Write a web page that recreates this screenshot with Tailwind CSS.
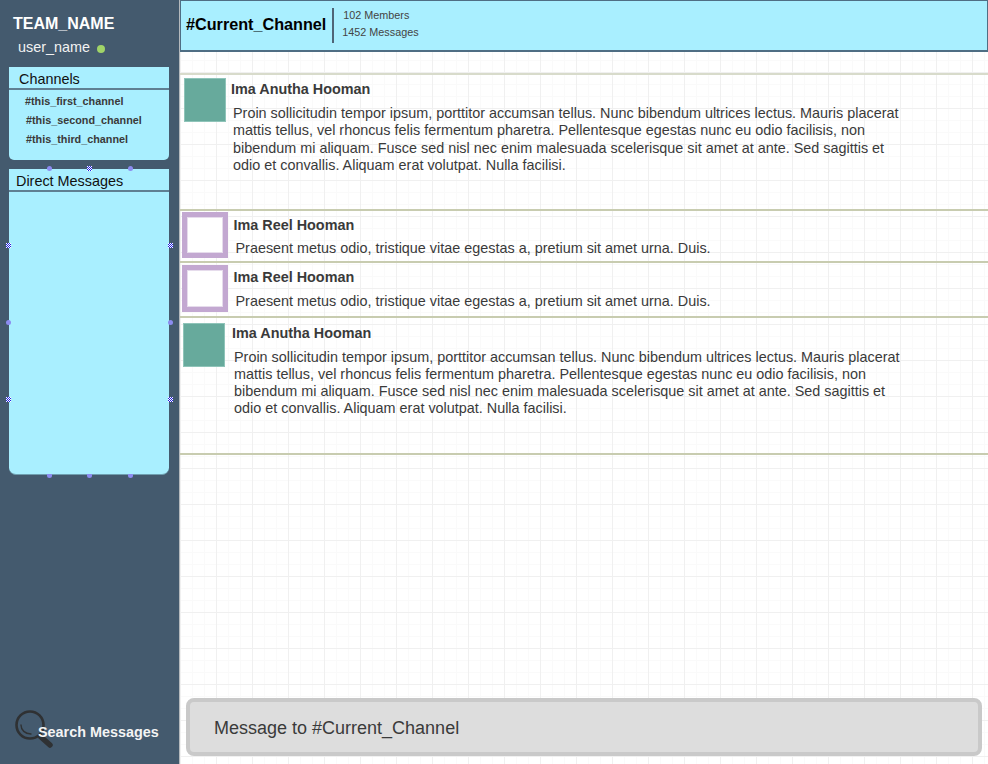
<!DOCTYPE html>
<html>
<head>
<meta charset="utf-8">
<script src="https://cdn.jsdelivr.net/npm/@tailwindcss/browser@4"></script>
</head>
<body class="m-0">
<div class="relative flex h-[764px] w-[988px] overflow-hidden bg-white font-['Liberation_Sans',Arial,sans-serif]">
  <aside class="relative flex h-full w-[180px] shrink-0 flex-col border-r border-r-[#b5b9bd] bg-[#445a6e]">
    <h1 class="ml-[13px] mt-[14px] text-[16px] font-bold leading-[19px] text-white">TEAM_NAME</h1>
    <div class="ml-[18px] mt-[6px] flex items-center text-[14.4px] leading-[17px] text-[#f2f2f2]">
      <span>user_name</span><span class="ml-[7px] mt-[2px] h-[8px] w-[8px] rounded-full bg-[#a0d468]"></span>
    </div>
    <section class="ml-[9px] mt-[11px] h-[93px] w-[160px] rounded-b-[5px] bg-[#a9efff]">
      <div class="h-[23px] border-b-2 border-b-[#5f7f92] pl-[10px] pt-[4px] text-[14.4px] leading-[17px] text-[#111]">Channels</div>
      <ul class="text-[10.8px] font-bold leading-[13px] text-[#3a3a3a]">
        <li class="ml-[16px] mt-[5px]">#this_first_channel</li>
        <li class="ml-[17px] mt-[6px]">#this_second_channel</li>
        <li class="ml-[17px] mt-[6px]">#this_third_channel</li>
      </ul>
    </section>
    <section class="ml-[9px] mt-[9px] h-[306px] w-[160px] rounded-b-[7px] border-b border-b-[#6f9fb0] bg-[#a9efff]">
      <div class="h-[23px] border-b-2 border-b-[#5f7f92] pl-[7px] pt-[4px] text-[14.4px] leading-[17px] text-[#111]">Direct Messages</div>
    </section>
    <div class="absolute bottom-[14px] left-[14px] flex items-center">
      <svg class="h-[40px] w-[40px]" viewBox="0 0 40 40" fill="none">
        <circle cx="16" cy="15" r="13.5" stroke="#2f3133" stroke-width="2.6"/>
        <path d="M7 15c0 5 4 9 10 9" stroke="#2f3133" stroke-width="1.4" stroke-linecap="round"/>
        <path d="M27 27l9 8" stroke="#2f3133" stroke-width="5.5" stroke-linecap="round"/>
      </svg>
    </div>
    <div class="absolute bottom-[23px] left-[38px] text-[14.4px] font-bold leading-[17px] text-[#f4f4f4]">Search Messages</div>
  </aside>

  <main class="flex h-full flex-1 flex-col bg-white bg-[linear-gradient(to_right,#f0f0f0_1px,transparent_1px),linear-gradient(to_bottom,#f0f0f0_1px,transparent_1px),linear-gradient(to_right,#fafafa_1px,transparent_1px),linear-gradient(to_bottom,#fafafa_1px,transparent_1px)] bg-[size:36px_36px,36px_36px,12px_12px,12px_12px] bg-[position:-180px_0,-180px_0,-180px_0,-180px_0]">
    <header class="flex h-[52px] shrink-0 items-center border-x border-b-2 border-t border-[#4f6e84] bg-[#a9efff] pb-[3px]">
      <div class="ml-[5px] text-[16.2px] font-bold leading-[22px] text-black">#Current_Channel</div>
      <div class="ml-[6px] mt-[3px] h-[35px] w-[2px] bg-[#4f6577]"></div>
      <div class="ml-[8px] text-[10.8px] leading-[17px] text-[#444]">
        <div class="ml-px">102 Members</div>
        <div>1452 Messages</div>
      </div>
    </header>

    <div class="mt-[21px] shrink-0 text-[#3a3a3a]">
      <article class="flex h-[136px] border-t-2 border-t-[#d8dbcb] pl-[4px] pt-[3px]">
        <div class="h-[44px] w-[42px] shrink-0 border border-[#8fc4b9] bg-[#67aa9c]"></div>
        <div class="ml-[5px] w-[680px]">
          <h2 class="mt-[3px] text-[14.4px] font-bold leading-[17px]">Ima Anutha Hooman</h2>
          <p class="ml-[2px] mt-[7px] text-[14.4px] leading-[17.33px]">Proin sollicitudin tempor ipsum, porttitor accumsan tellus. Nunc bibendum ultrices lectus. Mauris placerat mattis tellus, vel rhoncus felis fermentum pharetra. Pellentesque egestas nunc eu odio facilisis, non bibendum mi aliquam. Fusce sed nisl nec enim malesuada scelerisque sit amet at ante. Sed sagittis et odio et convallis. Aliquam erat volutpat. Nulla facilisi.</p>
        </div>
      </article>
      <article class="flex h-[52px] border-t-2 border-t-[#c8ccb0] pl-[2px] pt-[1px]">
        <div class="h-[46px] w-[46px] shrink-0 border-[5px] border-[#c3a8d1] bg-white shadow-[inset_0_0_0_1px_#e6dcec]"></div>
        <div class="ml-[5.5px]">
          <h2 class="mt-[5px] text-[14.4px] font-bold leading-[17px]">Ima Reel Hooman</h2>
          <p class="ml-[2px] mt-[6px] text-[14.4px] leading-[17px]">Praesent metus odio, tristique vitae egestas a, pretium sit amet urna. Duis.</p>
        </div>
      </article>
      <article class="flex h-[55px] border-t-2 border-t-[#c8ccb0] pl-[2px] pt-[2px]">
        <div class="h-[47px] w-[46px] shrink-0 border-[5px] border-[#c3a8d1] bg-white shadow-[inset_0_0_0_1px_#e6dcec]"></div>
        <div class="ml-[5.5px]">
          <h2 class="mt-[4px] text-[14.4px] font-bold leading-[17px]">Ima Reel Hooman</h2>
          <p class="ml-[2px] mt-[7px] text-[14.4px] leading-[17px]">Praesent metus odio, tristique vitae egestas a, pretium sit amet urna. Duis.</p>
        </div>
      </article>
      <article class="flex h-[139px] border-y-2 border-t-[#c8ccb0] border-b-[#c8ccb0] pl-[3px] pt-[5px]">
        <div class="h-[44px] w-[42px] shrink-0 border border-[#8fc4b9] bg-[#67aa9c]"></div>
        <div class="ml-[7px] w-[680px]">
          <h2 class="mt-[2px] text-[14.4px] font-bold leading-[17px]">Ima Anutha Hooman</h2>
          <p class="ml-[2px] mt-[7px] text-[14.4px] leading-[17px]">Proin sollicitudin tempor ipsum, porttitor accumsan tellus. Nunc bibendum ultrices lectus. Mauris placerat mattis tellus, vel rhoncus felis fermentum pharetra. Pellentesque egestas nunc eu odio facilisis, non bibendum mi aliquam. Fusce sed nisl nec enim malesuada scelerisque sit amet at ante. Sed sagittis et odio et convallis. Aliquam erat volutpat. Nulla facilisi.</p>
        </div>
      </article>
    </div>

    <div class="ml-[6px] mr-[6px] mt-auto mb-[8px] flex h-[58px] shrink-0 items-center rounded-[8px] border-[4px] border-[#c9c9c9] bg-[#dddddd] pl-[24px] pt-[2px] text-[18px] text-[#3a3a3a]">Message to #Current_Channel</div>
  </main>

  <!-- resize handles of the wireframe selection -->
  <span class="absolute left-[47px] top-[166px] h-[5px] w-[5px] rounded-sm bg-[#8c8cf0]"></span>
  <span class="absolute left-[87px] top-[166px] h-[5px] w-[5px] bg-[repeating-conic-gradient(#2222dd_0_25%,#fff_0_50%)] bg-[size:2px_2px]"></span>
  <span class="absolute left-[128px] top-[166px] h-[5px] w-[5px] rounded-sm bg-[#8c8cf0]"></span>
  <span class="absolute left-[6px] top-[243px] h-[5px] w-[5px] bg-[repeating-conic-gradient(#2222dd_0_25%,#fff_0_50%)] bg-[size:2px_2px]"></span>
  <span class="absolute left-[168px] top-[243px] h-[5px] w-[5px] bg-[repeating-conic-gradient(#2222dd_0_25%,#fff_0_50%)] bg-[size:2px_2px]"></span>
  <span class="absolute left-[6px] top-[320px] h-[5px] w-[5px] rounded-sm bg-[#8c8cf0]"></span>
  <span class="absolute left-[168px] top-[320px] h-[5px] w-[5px] rounded-sm bg-[#8c8cf0]"></span>
  <span class="absolute left-[6px] top-[397px] h-[5px] w-[5px] bg-[repeating-conic-gradient(#2222dd_0_25%,#fff_0_50%)] bg-[size:2px_2px]"></span>
  <span class="absolute left-[168px] top-[397px] h-[5px] w-[5px] bg-[repeating-conic-gradient(#2222dd_0_25%,#fff_0_50%)] bg-[size:2px_2px]"></span>
  <span class="absolute left-[47px] top-[474px] h-[4px] w-[5px] rounded-b-sm bg-[#8c8cf0]"></span>
  <span class="absolute left-[87px] top-[474px] h-[4px] w-[5px] rounded-b-sm bg-[#8c8cf0]"></span>
  <span class="absolute left-[128px] top-[474px] h-[4px] w-[5px] rounded-b-sm bg-[#8c8cf0]"></span>
</div>
</body>
</html>
